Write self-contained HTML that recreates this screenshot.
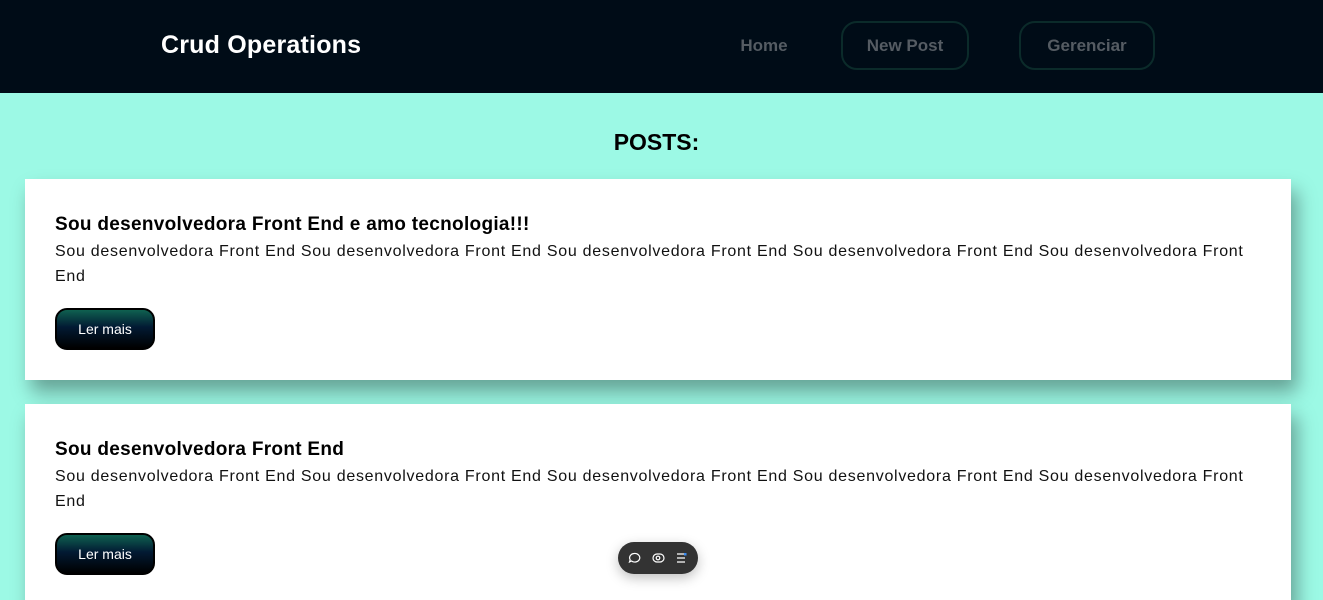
<!DOCTYPE html>
<html><head><meta charset="utf-8"><style>
*{margin:0;padding:0;box-sizing:border-box}
html,body{width:1323px;height:600px;overflow:hidden}
body{background:#9cf9e5;font-family:"Liberation Sans",sans-serif;position:relative}
header{height:93px;background:#000c17;position:relative}
.logo{position:absolute;left:161px;top:31px;color:#fff;font-weight:bold;font-size:25px;letter-spacing:0.2px}
.nav a{position:absolute;color:#555c63;font-weight:bold;font-size:17px;text-decoration:none;display:flex;align-items:center;justify-content:center;height:49px;top:21px;border-radius:16px}
.b{border:2px solid #0b2b2a}
h1{position:absolute;top:129px;width:100%;text-align:center;font-size:23px;font-weight:bold;color:#000;padding-right:10px}
.card{position:absolute;left:25px;width:1266px;height:201px;background:#fff;box-shadow:6px 12px 18px rgba(0,0,0,0.35);padding:35px 30px}
.card h2{font-size:19px;font-weight:bold;color:#000;margin-bottom:3px;letter-spacing:0.3px}
.card p{font-size:16px;line-height:25px;color:#111;letter-spacing:0.72px;white-space:nowrap}
.btn{position:absolute;left:30px;top:129px;width:100px;height:42px;border:2px solid #000;border-radius:12px;background:linear-gradient(#0f6150,#021a33 45%,#000 100%);color:#fff;font-size:14px;display:flex;align-items:center;justify-content:center}
.tb{position:absolute;left:618px;top:542px;width:80px;height:32px;border-radius:16px;background:#333;box-shadow:0 4px 12px rgba(0,0,0,0.25)}
</style></head><body>
<header>
<div class="logo">Crud Operations</div>
<div class="nav">
<a style="left:720px;width:88px">Home</a>
<a class="b" style="left:841px;width:128px">New Post</a>
<a class="b" style="left:1019px;width:136px">Gerenciar</a>
</div>
</header>
<h1>POSTS:</h1>
<div class="card" style="top:179px">
<h2>Sou desenvolvedora Front End e amo tecnologia!!!</h2>
<p>Sou desenvolvedora Front End Sou desenvolvedora Front End Sou desenvolvedora Front End Sou desenvolvedora Front End Sou desenvolvedora Front<br>End</p>
<div class="btn">Ler mais</div>
</div>
<div class="card" style="top:404px">
<h2>Sou desenvolvedora Front End</h2>
<p>Sou desenvolvedora Front End Sou desenvolvedora Front End Sou desenvolvedora Front End Sou desenvolvedora Front End Sou desenvolvedora Front<br>End</p>
<div class="btn">Ler mais</div>
</div>
<div class="tb">
<svg width="80" height="32" viewBox="0 0 80 32" fill="none" stroke="#fff" stroke-width="1.2">
<path d="M16 11.5a5 4.3 0 1 1 -2.5 7.5l-2 1 .7-2.2a5 4.3 0 0 1 3.8-6.3z"/>
<rect x="35" y="12" width="11" height="8" rx="4"/><circle cx="40" cy="16" r="1.8"/>
<path d="M59 12h7M59 16h8M59 20h8"/>
<rect x="66" y="11" width="2.5" height="2.5" fill="#3b8cf0" stroke="none"/>
</svg>
</div>
</body></html>
